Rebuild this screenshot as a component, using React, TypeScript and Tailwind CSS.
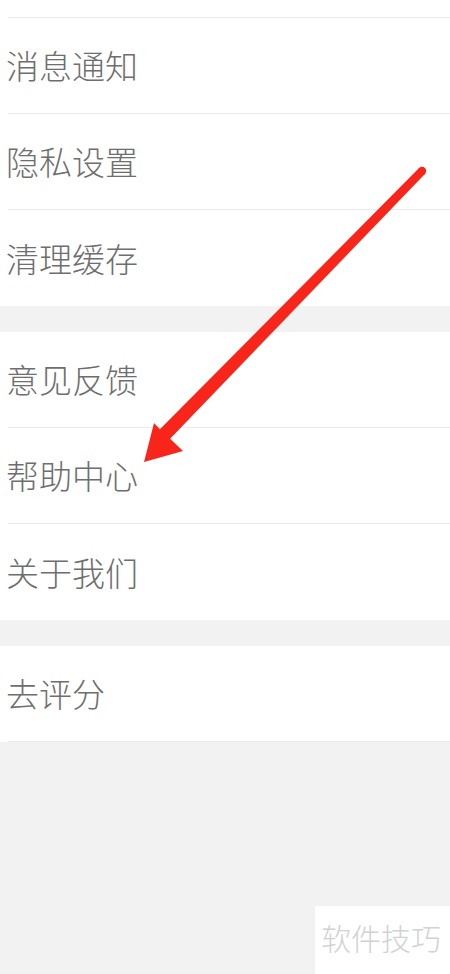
import React from "react";

const font = { fontFamily: '"Noto Sans CJK SC", "Noto Sans", sans-serif' };

function Row({ label, last }: { label: string; last?: boolean }) {
  return (
    <div className="bg-white pl-2">
      <div
        className={`h-[96px] flex items-center ${last ? "" : "border-b border-[#ebebeb]"}`}
      >
        <span className="ml-[-2px] text-[33px] leading-none font-light text-[#6e6e6e]" style={font}>
          {label}
        </span>
      </div>
    </div>
  );
}

export default function App() {
  return (
    <div className="relative w-[450px] h-[974px] bg-[#f2f2f2] overflow-hidden" style={font}>
      <div className="bg-white pl-2">
        <div className="h-[18px] border-b border-[#ebebeb]" />
      </div>
      <div className="flex flex-col">
        <Row label="消息通知" />
        <Row label="隐私设置" />
        <Row label="清理缓存" last />
      </div>
      <div className="h-[26px]" />
      <div className="flex flex-col">
        <Row label="意见反馈" />
        <Row label="帮助中心" />
        <Row label="关于我们" last />
      </div>
      <div className="h-[26px]" />
      <div className="flex flex-col">
        <Row label="去评分" />
      </div>

      <svg className="absolute left-0 top-0" width="450" height="974" viewBox="0 0 450 974">
        <circle cx="422" cy="171" r="4.2" fill="#f8251b" />
        <polygon
          points="419.1,168.1 159.9,429.2 154,423 144,462 183,451 170.1,438.8 424.9,173.9"
          fill="#f8251b"
        />
      </svg>

      <div className="absolute left-[315px] top-[906px] w-[135px] h-[68px] bg-white flex items-start pt-[16px] pl-[6px]">
        <span className="text-[30px] leading-none font-light text-[#d2d2d2]" style={font}>
          软件技巧
        </span>
      </div>
    </div>
  );
}
